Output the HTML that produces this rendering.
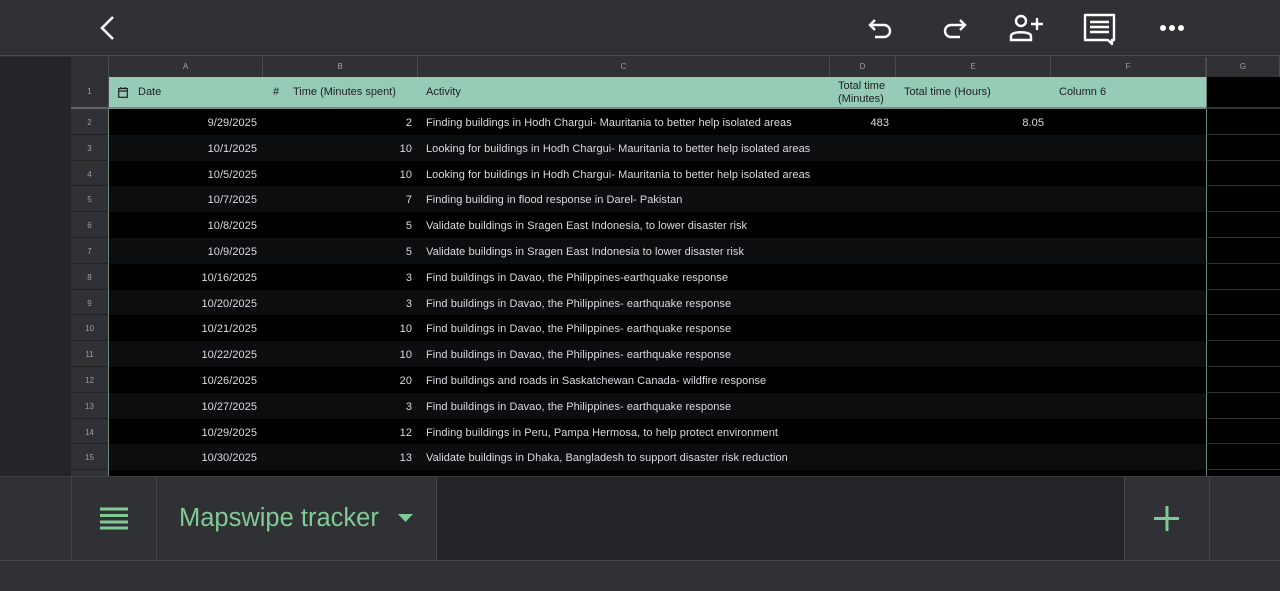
<!DOCTYPE html>
<html><head><style>
*{margin:0;padding:0;box-sizing:border-box}
body{width:1280px;height:591px;overflow:hidden;background:#303134;font-family:"Liberation Sans",sans-serif;position:relative}
.a{position:absolute}
.top{left:0;top:0;width:1280px;height:56px;background:#303134;border-bottom:1px solid #4a4b4e}
.gut{left:0;top:57px;width:71px;height:419px;background:#242528}
.colh{top:57px;height:20px;background:#303134;color:#9aa0a6;font-size:8px;text-align:center;line-height:20px;border-right:1px solid #4a4b4e}
.row{left:71px;width:1209px;height:25.8px;font-size:11px;color:#dadce0;line-height:28px}
.rn{position:absolute;left:0;width:38px;height:100%;background:#303134;color:#9aa0a6;font-size:8px;text-align:center;border-bottom:1px solid #222;border-right:1px solid #4a4b4e}
.c{position:absolute;top:0;height:100%;white-space:nowrap;letter-spacing:0.05px}
.g{position:absolute;left:1135px;width:74px;height:100%;background:#000;border-left:1px solid #6b8a7e;border-bottom:1px solid #333}
</style></head><body>
<div class="a top">
<svg class="a" style="left:96px;top:14px" width="24" height="28" viewBox="0 0 24 28"><path d="M17 3 L6 14 L17 25" stroke="#fff" stroke-width="2.6" fill="none"/></svg>
<svg class="a" style="left:866px;top:14px" width="30" height="30" viewBox="0 0 30 30"><path d="M9 6 L4 11 L9 16 M4 11 H18 A6 6 0 0 1 18 23 H9" stroke="#fff" stroke-width="2.4" fill="none"/></svg>
<svg class="a" style="left:939px;top:14px" width="30" height="30" viewBox="0 0 30 30"><path d="M21 6 L26 11 L21 16 M26 11 H12 A6 6 0 0 0 12 23 H21" stroke="#fff" stroke-width="2.4" fill="none"/></svg>
<svg class="a" style="left:1008px;top:12px" width="38" height="32" viewBox="0 0 38 32"><circle cx="13" cy="9" r="5" stroke="#fff" stroke-width="2.4" fill="none"/><path d="M3 28 V24 C3 19 23 19 23 24 V28 Z" stroke="#fff" stroke-width="2.4" fill="none"/><path d="M29 6 V18 M23 12 H35" stroke="#fff" stroke-width="2.4"/></svg>
<svg class="a" style="left:1083px;top:12px" width="34" height="34" viewBox="0 0 34 34"><path d="M2 3 H31 V28 H29 V32 L25 28 H2 Z" stroke="#fff" stroke-width="2.4" fill="none" stroke-linejoin="round"/><path d="M7 10 H26 M7 15 H26 M7 20 H26" stroke="#fff" stroke-width="2.4"/></svg>
<svg class="a" style="left:1158px;top:22px" width="30" height="12"><circle cx="5" cy="6" r="3" fill="#fff"/><circle cx="14" cy="6" r="3" fill="#fff"/><circle cx="23" cy="6" r="3" fill="#fff"/></svg>
</div>
<div class="a gut"></div>
<div class="a colh" style="left:71px;width:38px"></div>
<div class="a colh" style="left:109px;width:154px">A</div>
<div class="a colh" style="left:263px;width:155px">B</div>
<div class="a colh" style="left:418px;width:412px">C</div>
<div class="a colh" style="left:830px;width:66px">D</div>
<div class="a colh" style="left:896px;width:155px">E</div>
<div class="a colh" style="left:1051px;width:155px">F</div>
<div class="a colh" style="left:1206px;width:74px;border-left:1px solid #4a4b4e">G</div>
<div class="a" style="left:71px;top:77px;width:1209px;height:32px">
<div class="rn" style="line-height:30px;border-bottom:2px solid #5f6368">1</div>
<div class="a" style="left:38px;top:0;width:1097px;height:32px;background:#96cbb6;border-bottom:2px solid #7f8a86;font-size:11px;color:#202124;line-height:31px">
<svg class="a" style="left:9px;top:10px" width="10" height="11" viewBox="0 0 10 11"><rect x="0.7" y="1.5" width="8.6" height="8.8" stroke="#202124" fill="none" stroke-width="1.2"/><path d="M1 4 H9 M3 0 V2 M7 0 V2" stroke="#202124" stroke-width="1.2"/></svg>
<span class="a" style="left:29px">Date</span>
<span class="a" style="left:164px">#</span>
<span class="a" style="left:184px">Time (Minutes spent)</span>
<span class="a" style="left:317px">Activity</span>
<span class="a" style="left:729px;line-height:13px;top:3px">Total time<br>(Minutes)</span>
<span class="a" style="left:795px">Total time (Hours)</span>
<span class="a" style="left:950px">Column 6</span>
</div>
<div class="g" style="height:32px;border-bottom:2px solid #333"></div>
</div>
<div class="a" id="rows" style="left:0;top:109px">
<div class="a row" style="top:0;background:#000"><div class="rn">2</div><div class="c" style="right:1023px">9/29/2025</div><div class="c" style="right:868px">2</div><div class="c" style="left:355px">Finding buildings in Hodh Chargui- Mauritania to better help isolated areas</div><div class="c" style="right:391px">483</div><div class="c" style="right:236px">8.05</div><div class="g"></div></div>
<div class="a row" style="top:25.8px;background:#0c0d0f"><div class="rn">3</div><div class="c" style="right:1023px">10/1/2025</div><div class="c" style="right:868px">10</div><div class="c" style="left:355px">Looking for buildings in Hodh Chargui- Mauritania to better help isolated areas</div><div class="g"></div></div>
<div class="a row" style="top:51.6px;background:#000"><div class="rn">4</div><div class="c" style="right:1023px">10/5/2025</div><div class="c" style="right:868px">10</div><div class="c" style="left:355px">Looking for buildings in Hodh Chargui- Mauritania to better help isolated areas</div><div class="g"></div></div>
<div class="a row" style="top:77.4px;background:#0c0d0f"><div class="rn">5</div><div class="c" style="right:1023px">10/7/2025</div><div class="c" style="right:868px">7</div><div class="c" style="left:355px">Finding building in flood response in Darel- Pakistan</div><div class="g"></div></div>
<div class="a row" style="top:103.2px;background:#000"><div class="rn">6</div><div class="c" style="right:1023px">10/8/2025</div><div class="c" style="right:868px">5</div><div class="c" style="left:355px">Validate buildings in Sragen East Indonesia, to lower disaster risk</div><div class="g"></div></div>
<div class="a row" style="top:129px;background:#0c0d0f"><div class="rn">7</div><div class="c" style="right:1023px">10/9/2025</div><div class="c" style="right:868px">5</div><div class="c" style="left:355px">Validate buildings in Sragen East Indonesia to lower disaster risk</div><div class="g"></div></div>
<div class="a row" style="top:154.8px;background:#000"><div class="rn">8</div><div class="c" style="right:1023px">10/16/2025</div><div class="c" style="right:868px">3</div><div class="c" style="left:355px">Find buildings in Davao, the Philippines-earthquake response</div><div class="g"></div></div>
<div class="a row" style="top:180.6px;background:#0c0d0f"><div class="rn">9</div><div class="c" style="right:1023px">10/20/2025</div><div class="c" style="right:868px">3</div><div class="c" style="left:355px">Find buildings in Davao, the Philippines- earthquake response</div><div class="g"></div></div>
<div class="a row" style="top:206.4px;background:#000"><div class="rn">10</div><div class="c" style="right:1023px">10/21/2025</div><div class="c" style="right:868px">10</div><div class="c" style="left:355px">Find buildings in Davao, the Philippines- earthquake response</div><div class="g"></div></div>
<div class="a row" style="top:232.2px;background:#0c0d0f"><div class="rn">11</div><div class="c" style="right:1023px">10/22/2025</div><div class="c" style="right:868px">10</div><div class="c" style="left:355px">Find buildings in Davao, the Philippines- earthquake response</div><div class="g"></div></div>
<div class="a row" style="top:258px;background:#000"><div class="rn">12</div><div class="c" style="right:1023px">10/26/2025</div><div class="c" style="right:868px">20</div><div class="c" style="left:355px">Find buildings and roads in Saskatchewan Canada- wildfire response</div><div class="g"></div></div>
<div class="a row" style="top:283.8px;background:#0c0d0f"><div class="rn">13</div><div class="c" style="right:1023px">10/27/2025</div><div class="c" style="right:868px">3</div><div class="c" style="left:355px">Find buildings in Davao, the Philippines- earthquake response</div><div class="g"></div></div>
<div class="a row" style="top:309.6px;background:#000"><div class="rn">14</div><div class="c" style="right:1023px">10/29/2025</div><div class="c" style="right:868px">12</div><div class="c" style="left:355px">Finding buildings in Peru, Pampa Hermosa, to help protect environment</div><div class="g"></div></div>
<div class="a row" style="top:335.4px;background:#0c0d0f"><div class="rn">15</div><div class="c" style="right:1023px">10/30/2025</div><div class="c" style="right:868px">13</div><div class="c" style="left:355px">Validate buildings in Dhaka, Bangladesh to support disaster risk reduction</div><div class="g"></div></div>
<div class="a row" style="top:361.2px;background:#000"><div class="rn"></div><div class="g"></div></div>
</div>
<div class="a" style="left:108px;top:108px;width:1px;height:368px;background:#6b8a7e"></div>
<!-- bottom bar -->
<div class="a" style="left:0;top:476px;width:1280px;height:85px;background:#303134;border-top:1px solid #3c3d40;border-bottom:1px solid #45464a"></div>
<div class="a" style="left:71px;top:476px;width:1px;height:85px;background:#45464a"></div>
<div class="a" style="left:156px;top:476px;width:1px;height:85px;background:#45464a"></div>
<div class="a" style="left:436px;top:477px;width:688px;height:83px;background:#242528;border-left:1px solid #45464a"></div>
<div class="a" style="left:1124px;top:476px;width:1px;height:85px;background:#45464a"></div>
<div class="a" style="left:1209px;top:476px;width:1px;height:85px;background:#45464a"></div>
<svg class="a" style="left:100px;top:507px" width="28" height="23"><path d="M0 2 H28 M0 8.5 H28 M0 15 H28 M0 21 H28" stroke="#81c995" stroke-width="3"/></svg>
<div class="a" style="left:179px;top:502px;font-size:25.5px;color:#81c995;line-height:32px">Mapswipe tracker</div>
<svg class="a" style="left:398px;top:514px" width="16" height="9"><path d="M0 0 H15 L7.5 8 Z" fill="#81c995"/></svg>
<svg class="a" style="left:1154px;top:506px" width="26" height="26"><path d="M13 0 V25 M0 12.5 H25" stroke="#81c995" stroke-width="3"/></svg>
</body></html>
